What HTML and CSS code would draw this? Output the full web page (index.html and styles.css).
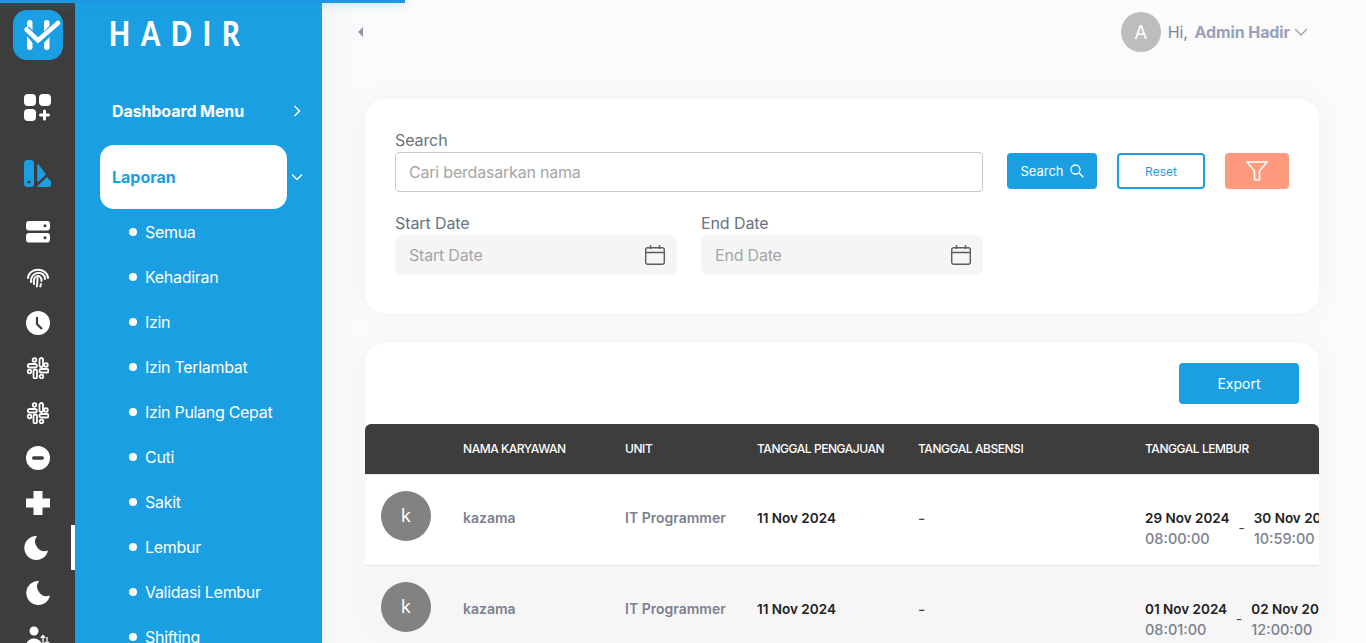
FILE: index.html
```html
<!DOCTYPE html>
<html lang="id">
<head>
<meta charset="utf-8">
<title>Hadir</title>
<link rel="stylesheet" href="styles.css">
</head>
<body>
<div class="progress"></div>
<nav class="rail">
  <div class="rail-logo">
    <svg viewBox="0 0 50 50" width="50" height="50"><rect width="50" height="50" rx="14" fill="#1a9fe2"/><rect x="14" y="10" width="5.500" height="30" rx="2.700" fill="#fff"/><rect x="31" y="10" width="5.500" height="30" rx="2.700" fill="#fff"/><path d="M13 19 L25 33 L46 12" fill="none" stroke="#1a9fe2" stroke-width="8"/><path d="M13.500 19.500 L25 30.500 L45 13" fill="none" stroke="#fff" stroke-width="4.500" stroke-linecap="round"/></svg>
  </div>
  <div class="slot slot-grid">
    <svg viewBox="0 0 28 28" width="28" height="28" fill="#fff"><rect x="0" y="0" width="12" height="12" rx="4"/><rect x="15" y="0" width="12" height="12" rx="4"/><rect x="0" y="15" width="12" height="12" rx="4"/><path d="M20.500 17v8M16.500 21h8" stroke="#fff" stroke-width="3" stroke-linecap="round"/></svg>
  </div>
  <div class="slot slot-brand">
    <svg viewBox="0 0 28 28" width="28" height="28"><rect x="0" y="1" width="10" height="27" rx="3.500" fill="#1a9fe2"/><circle cx="5" cy="23" r="1.600" fill="#3d3d3d"/><path d="M14 6 L21 15.500 L14 22Z" fill="#1a9fe2" stroke="#1a9fe2" stroke-width="1.600" stroke-linejoin="round"/><path d="M12.500 28 L23 18 L27 22.500 V26 a2 2 0 0 1-2 2Z" fill="#1a9fe2"/></svg>
  </div>
  <div class="slot">
    <svg viewBox="0 0 24 24" width="24" height="24"><rect x="0" y="0" width="24" height="9.500" rx="3" fill="#fff"/><rect x="0" y="12" width="24" height="9.500" rx="3" fill="#fff"/><circle cx="19" cy="4.750" r="1.500" fill="#3d3d3d"/><circle cx="19" cy="16.750" r="1.500" fill="#3d3d3d"/></svg>
  </div>
  <div class="slot">
    <svg viewBox="0 0 22 20" width="22" height="20" fill="none" stroke="#fff" stroke-width="2" stroke-linecap="round"><path d="M1 10 C2 -1 20 -1 21 10"/><path d="M4 14 C3 3 18 2 18 11"/><path d="M7 16 C5 6 15 6 14.500 13"/><path d="M10.500 10 C10.500 13 10.500 15 9.800 18.500"/><path d="M14 16 L13.300 18.500"/></svg>
  </div>
  <div class="slot">
    <svg viewBox="0 0 24 24" width="24" height="24"><circle cx="12" cy="12" r="12" fill="#fff"/><path d="M11 6 V13 L16 18" fill="none" stroke="#3d3d3d" stroke-width="2.200"/></svg>
  </div>
  <div class="slot">
    <svg viewBox="0 0 22 22" width="22" height="22" fill="none" stroke="#fff" stroke-width="1.800"><rect x="12.500" y="1" width="3.500" height="9" rx="1.750"/><rect x="6.500" y="12.500" width="3.500" height="9" rx="1.750"/><rect x="0.800" y="7" width="9" height="3.500" rx="1.750"/><rect x="12.500" y="12" width="9" height="3.500" rx="1.750"/><circle cx="7.500" cy="3" r="1.800"/><circle cx="19" cy="8" r="1.800"/><circle cx="2.500" cy="14.500" r="1.800"/><circle cx="14.500" cy="19.500" r="1.800"/></svg>
  </div>
  <div class="slot">
    <svg viewBox="0 0 22 22" width="22" height="22" fill="none" stroke="#fff" stroke-width="1.800"><rect x="12.500" y="1" width="3.500" height="9" rx="1.750"/><rect x="6.500" y="12.500" width="3.500" height="9" rx="1.750"/><rect x="0.800" y="7" width="9" height="3.500" rx="1.750"/><rect x="12.500" y="12" width="9" height="3.500" rx="1.750"/><circle cx="7.500" cy="3" r="1.800"/><circle cx="19" cy="8" r="1.800"/><circle cx="2.500" cy="14.500" r="1.800"/><circle cx="14.500" cy="19.500" r="1.800"/></svg>
  </div>
  <div class="slot">
    <svg viewBox="0 0 24 24" width="24" height="24"><circle cx="12" cy="12" r="12" fill="#fff"/><rect x="6" y="10.300" width="12" height="3.400" rx="1.700" fill="#3d3d3d"/></svg>
  </div>
  <div class="slot">
    <svg viewBox="0 0 24 24" width="24" height="24"><path d="M7.500 0 H16.500 V7.500 H24 V16.500 H16.500 V24 H7.500 V16.500 H0 V7.500 H7.500Z" fill="#fff"/></svg>
  </div>
  <div class="slot slot-active">
    <svg class="moon-shift" viewBox="0 0 24 24" width="24" height="24"><path d="M13 0 A12 12 0 1 0 24 14.500 A9.500 9.500 0 0 1 13 0Z" fill="#fff"/></svg>
  </div>
  <div class="slot">
    <svg viewBox="0 0 24 24" width="24" height="24"><path d="M13 0 A12 12 0 1 0 24 14.500 A9.500 9.500 0 0 1 13 0Z" fill="#fff"/></svg>
  </div>
  <div class="slot">
    <svg viewBox="0 0 24 24" width="24" height="24" fill="#fff"><circle cx="8" cy="5" r="4.500"/><path d="M0 20 C0 10 16 10 16 20Z"/><path d="M17 17 V10 M14.800 12 L17 9.500 L19.200 12 M21 11 V18 M18.800 16 L21 18.500 L23.200 16" fill="none" stroke="#fff" stroke-width="1.300"/></svg>
  </div>
</nav>
<aside class="sidebar">
  <div class="brand"><span class="brand-text">HADIR</span></div>
  <a class="menu-item menu-top">
    <span>Dashboard Menu</span>
    <svg class="chev" viewBox="0 0 8 12" width="8" height="12"><path d="M1.500 1 L6.500 6 L1.500 11" fill="none" stroke="#fff" stroke-width="1.400"/></svg>
  </a>
  <div class="menu-group">
    <a class="menu-pill">Laporan</a>
    <svg class="chev" viewBox="0 0 12 8" width="12" height="8"><path d="M1 1.500 L6 6.500 L11 1.500" fill="none" stroke="#fff" stroke-width="1.400"/></svg>
  </div>
  <ul class="submenu">
    <li>Semua</li>
    <li>Kehadiran</li>
    <li>Izin</li>
    <li>Izin Terlambat</li>
    <li>Izin Pulang Cepat</li>
    <li>Cuti</li>
    <li>Sakit</li>
    <li>Lembur</li>
    <li>Validasi Lembur</li>
    <li>Shifting</li>
  </ul>
</aside>
<main class="main">
  <header class="topbar">
    <svg class="collapse" viewBox="0 0 6 10" width="6" height="10"><path d="M5 0 V10 L0 5Z" fill="#8f95a8"/></svg>
    <div class="user">
      <div class="user-avatar">A</div>
      <span class="hi">Hi,</span>
      <strong class="user-name">Admin Hadir</strong>
      <svg viewBox="0 0 14 8" width="14" height="8"><path d="M1 1 L7 7 L13 1" fill="none" stroke="#9aa1b9" stroke-width="1.300"/></svg>
    </div>
  </header>
  <section class="card filter-card">
    <div class="filter-row">
      <label class="field field-search">
        <span class="field-label">Search</span>
        <span class="input input-line">Cari berdasarkan nama</span>
      </label>
      <button class="btn btn-primary btn-search">Search
        <svg viewBox="0 0 14 14" width="14" height="14"><circle cx="5.500" cy="5.500" r="4.500" fill="none" stroke="#fff" stroke-width="1.300"/><path d="M9 9 L13.300 13.300" stroke="#fff" stroke-width="1.500"/></svg>
      </button>
      <button class="btn btn-outline">Reset</button>
      <button class="btn btn-filter">
        <svg viewBox="0 0 22 20" width="22" height="20"><path d="M1 1 H21 L13.500 10 V19 H9.500 L8.500 18 V10Z" fill="none" stroke="#fff" stroke-width="1.600"/></svg>
      </button>
    </div>
    <div class="date-row">
      <label class="field">
        <span class="field-label">Start Date</span>
        <span class="input input-date">Start Date
          <svg viewBox="0 0 20 20" width="20" height="20" fill="none" stroke="#5d5d5d" stroke-width="1.400"><rect x="0.700" y="2.700" width="18.600" height="16.600" rx="2"/><path d="M0.700 7.500 H19.300 M5.500 0 V4 M14.500 0 V4"/></svg>
        </span>
      </label>
      <label class="field">
        <span class="field-label">End Date</span>
        <span class="input input-date">End Date
          <svg viewBox="0 0 20 20" width="20" height="20" fill="none" stroke="#5d5d5d" stroke-width="1.400"><rect x="0.700" y="2.700" width="18.600" height="16.600" rx="2"/><path d="M0.700 7.500 H19.300 M5.500 0 V4 M14.500 0 V4"/></svg>
        </span>
      </label>
    </div>
  </section>
  <section class="card table-card">
    <div class="table-tools"><button class="btn btn-primary btn-export">Export</button></div>
    <table class="data">
      <colgroup><col class="c-av"><col class="c-name"><col class="c-unit"><col class="c-sub"><col class="c-abs"><col class="c-lem"></colgroup>
      <thead>
        <tr><th></th><th>NAMA KARYAWAN</th><th>UNIT</th><th>TANGGAL PENGAJUAN</th><th>TANGGAL ABSENSI</th><th>TANGGAL LEMBUR</th></tr>
      </thead>
      <tbody>
        <tr>
          <td class="td-av"><div class="avatar">k</div></td>
          <td class="muted">kazama</td>
          <td class="muted">IT Programmer</td>
          <td class="strong">11 Nov 2024</td>
          <td class="dash">-</td>
          <td>
            <div class="range">
              <div class="stamp"><b>29 Nov 2024</b><span>08:00:00</span></div>
              <i>-</i>
              <div class="stamp"><b>30 Nov 2024</b><span>10:59:00</span></div>
            </div>
          </td>
        </tr>
        <tr class="alt">
          <td class="td-av"><div class="avatar">k</div></td>
          <td class="muted">kazama</td>
          <td class="muted">IT Programmer</td>
          <td class="strong">11 Nov 2024</td>
          <td class="dash">-</td>
          <td>
            <div class="range">
              <div class="stamp"><b>01 Nov 2024</b><span>08:01:00</span></div>
              <i>-</i>
              <div class="stamp"><b>02 Nov 2024</b><span>12:00:00</span></div>
            </div>
          </td>
        </tr>
      </tbody>
    </table>
  </section>
</main>
</body>
</html>
```
FILE: styles.css
```css
* { box-sizing: border-box; }
html, body { height: 100%; }
body {
  margin: 0;
  display: flex;
  height: 100vh;
  overflow: hidden;
  font-family: Inter, "Noto Sans", sans-serif;
  color: #222;
  background: #f9fafa;
}
.progress {
  position: absolute;
  top: 0;
  left: 0;
  width: 405px;
  height: 3px;
  background: #1f97e0;
  box-shadow: 0 0 10px rgba(26, 159, 226, .5);
  z-index: 5;
}
.rail {
  flex: 0 0 75px;
  background: #3d3d3d;
  display: flex;
  flex-direction: column;
  align-items: center;
  padding-top: 10px;
}
.rail-logo { height: 50px; margin-bottom: 25px; }
.rail-logo svg { display: block; }
.slot {
  flex: 0 0 45px;
  width: 75px;
  display: flex;
  align-items: center;
  justify-content: center;
  position: relative;
}
.slot-grid { margin-bottom: 20px; }
.slot-brand { margin-bottom: 15px; }
.slot-active::after {
  content: "";
  position: absolute;
  top: 0;
  right: 0;
  width: 4px;
  height: 45px;
  background: #fff;
}
.moon-shift { margin-left: -4px; }
.sidebar {
  flex: 0 0 247px;
  background: #1a9fe2;
  color: #fff;
  padding: 0 0 0 25px;
  overflow: hidden;
}
.brand {
  padding: 12px 0 0 9px;
  height: 89px;
  font-family: Lato, sans-serif;
  font-size: 35px;
  line-height: 40px;
  font-weight: 900;
  letter-spacing: 14px;
}
.brand-text {
  display: inline-block;
  transform: scaleX(.78);
  transform-origin: left center;
}
.menu-item, .menu-group { display: flex; align-items: center; }
.menu-top {
  height: 44px;
  padding-left: 12px;
  font-size: 16px;
  font-weight: 700;
  letter-spacing: -.1px;
  justify-content: space-between;
  padding-right: 21px;
}
.menu-group {
  margin-top: 12px;
  gap: 4px;
}
.menu-pill {
  width: 187px;
  height: 64px;
  display: flex;
  align-items: center;
  padding-left: 12px;
  border-radius: 14px;
  background: #fff;
  color: #1a9fe2;
  font-size: 16px;
  font-weight: 700;
}
.submenu {
  list-style: none;
  margin: 0;
  padding: 0;
}
.submenu li {
  height: 45px;
  display: flex;
  align-items: center;
  gap: 8px;
  padding-left: 29px;
  font-size: 16px;
  letter-spacing: -.3px;
  white-space: nowrap;
}
.submenu li::before {
  content: "";
  width: 8px;
  height: 8px;
  border-radius: 50%;
  background: #fff;
}
.main {
  flex: 1;
  min-width: 0;
  padding: 0 47px 0 43px;
  background: linear-gradient(90deg, #f5f6f7 0, #fbfbfb 40px, #fbfbfb 100%);
}
.topbar {
  height: 99px;
  display: flex;
  justify-content: space-between;
  align-items: flex-start;
  padding-top: 12px;
}
.collapse { margin: 15px 0 0 -7px; }
.user {
  display: flex;
  align-items: center;
  height: 40px;
  margin-right: 11px;
  font-size: 16px;
  color: #7e8299;
}
.user-avatar {
  width: 40px;
  height: 40px;
  border-radius: 50%;
  background: #bdbdbd;
  color: #fff;
  display: flex;
  align-items: center;
  justify-content: center;
  font-size: 19px;
  margin-right: 7px;
}
.hi { margin-right: 7px; letter-spacing: -.2px; }
.user-name { color: #9aa1b9; font-weight: 700; margin-right: 4px; font-size: 16px; letter-spacing: -.1px; }
.card {
  background: #fff;
  border-radius: 20px;
  box-shadow: 0 0 30px rgba(76, 87, 125, .06);
}
.filter-card {
  height: 214px;
  padding: 30px;
  margin-bottom: 30px;
}
.filter-row {
  display: flex;
  align-items: flex-end;
}
.field { display: flex; flex-direction: column; width: 282px; }
.field-label {
  font-size: 16px;
  line-height: 23px;
  color: #6b7280;
  letter-spacing: -.1px;
}
.field-search { width: 588px; margin-right: 24px; }
.input {
  height: 40px;
  display: flex;
  align-items: center;
  padding: 0 12px 0 14px;
  font-size: 16px;
  color: #a5a5a5;
  letter-spacing: -.2px;
}
.input-line {
  border: 1px solid #c9c9c9;
  border-radius: 4px;
  padding-left: 13px;
}
.input-date {
  background: #f5f5f5;
  border-radius: 8px;
  justify-content: space-between;
}
.date-row {
  display: flex;
  gap: 24px;
  margin-top: 20px;
}
.btn {
  border: 0;
  font-family: inherit;
  display: flex;
  align-items: center;
  justify-content: center;
  border-radius: 4px;
  cursor: pointer;
}
.filter-row .btn { height: 36px; margin-bottom: 3px; }
.btn-primary { background: #1a9fe2; color: #fff; }
.btn-search {
  width: 90px;
  gap: 6px;
  font-size: 13px;
  margin-right: 20px;
}
.btn-outline {
  width: 88px;
  background: #fff;
  border: 2px solid #1a9fe2;
  color: #1a9fe2;
  font-size: 12px;
  margin-right: 20px;
}
.btn-filter { width: 64px; background: #ff9a7e; }
.table-card {
  overflow: hidden;
  height: 300px;
  padding-top: 20px;
}
.table-tools {
  display: flex;
  justify-content: flex-end;
  padding-right: 20px;
  margin-bottom: 20px;
}
.btn-export {
  width: 120px;
  height: 41px;
  font-size: 14px;
  padding-bottom: 2px;
}
.data {
  width: 1010px;
  table-layout: fixed;
  border-collapse: separate;
  border-spacing: 0;
}
.c-av { width: 98px; }
.c-name { width: 162px; }
.c-unit { width: 132px; }
.c-sub { width: 161px; }
.c-abs { width: 227px; }
.c-lem { width: 230px; }
.data thead th {
  height: 51px;
  background: #3d3d3d;
  border-bottom: 1px solid #e4e4e4;
  color: #fff;
  text-align: left;
  font-size: 12px;
  font-weight: 500;
  letter-spacing: -.45px;
  padding: 0 0 2px;
  white-space: nowrap;
}
.data thead th:first-child { border-top-left-radius: 6px; }
.data thead th:nth-child(6) { position: relative; }
.data thead th:nth-child(6)::after {
  content: "";
  position: absolute;
  top: 0;
  left: 168px;
  width: 6px;
  height: 6px;
  background: #fff;
  clip-path: path("M0 0 H6 V6 A6 6 0 0 0 0 0Z");
}
.data td {
  height: 91px;
  padding: 34px 0 0;
  vertical-align: top;
  font-size: 13.500px;
  line-height: 18px;
  border-bottom: 1px solid #e4e4e4;
  white-space: nowrap;
}
.alt td { background: #f6f6f6; }
.data .td-av { padding: 16px 0 0 16px; }
.avatar {
  width: 50px;
  height: 50px;
  border-radius: 50%;
  background: #828282;
  color: #fff;
  display: flex;
  align-items: center;
  justify-content: center;
  font-size: 18px;
  line-height: 1;
}
.data .muted { color: #7b8190; font-weight: 600; font-size: 14px; }
.strong { color: #222; font-weight: 600; }
.data .dash { color: #444; font-size: 16px; }
.range { display: flex; gap: 9px; }
.range i { font-style: normal; color: #444; padding-top: 10px; }
.stamp { display: flex; flex-direction: column; gap: 3px; }
.stamp b { font-weight: 600; color: #222; }
.stamp span { color: #7b8190; font-weight: 500; font-size: 14.500px; }
```
